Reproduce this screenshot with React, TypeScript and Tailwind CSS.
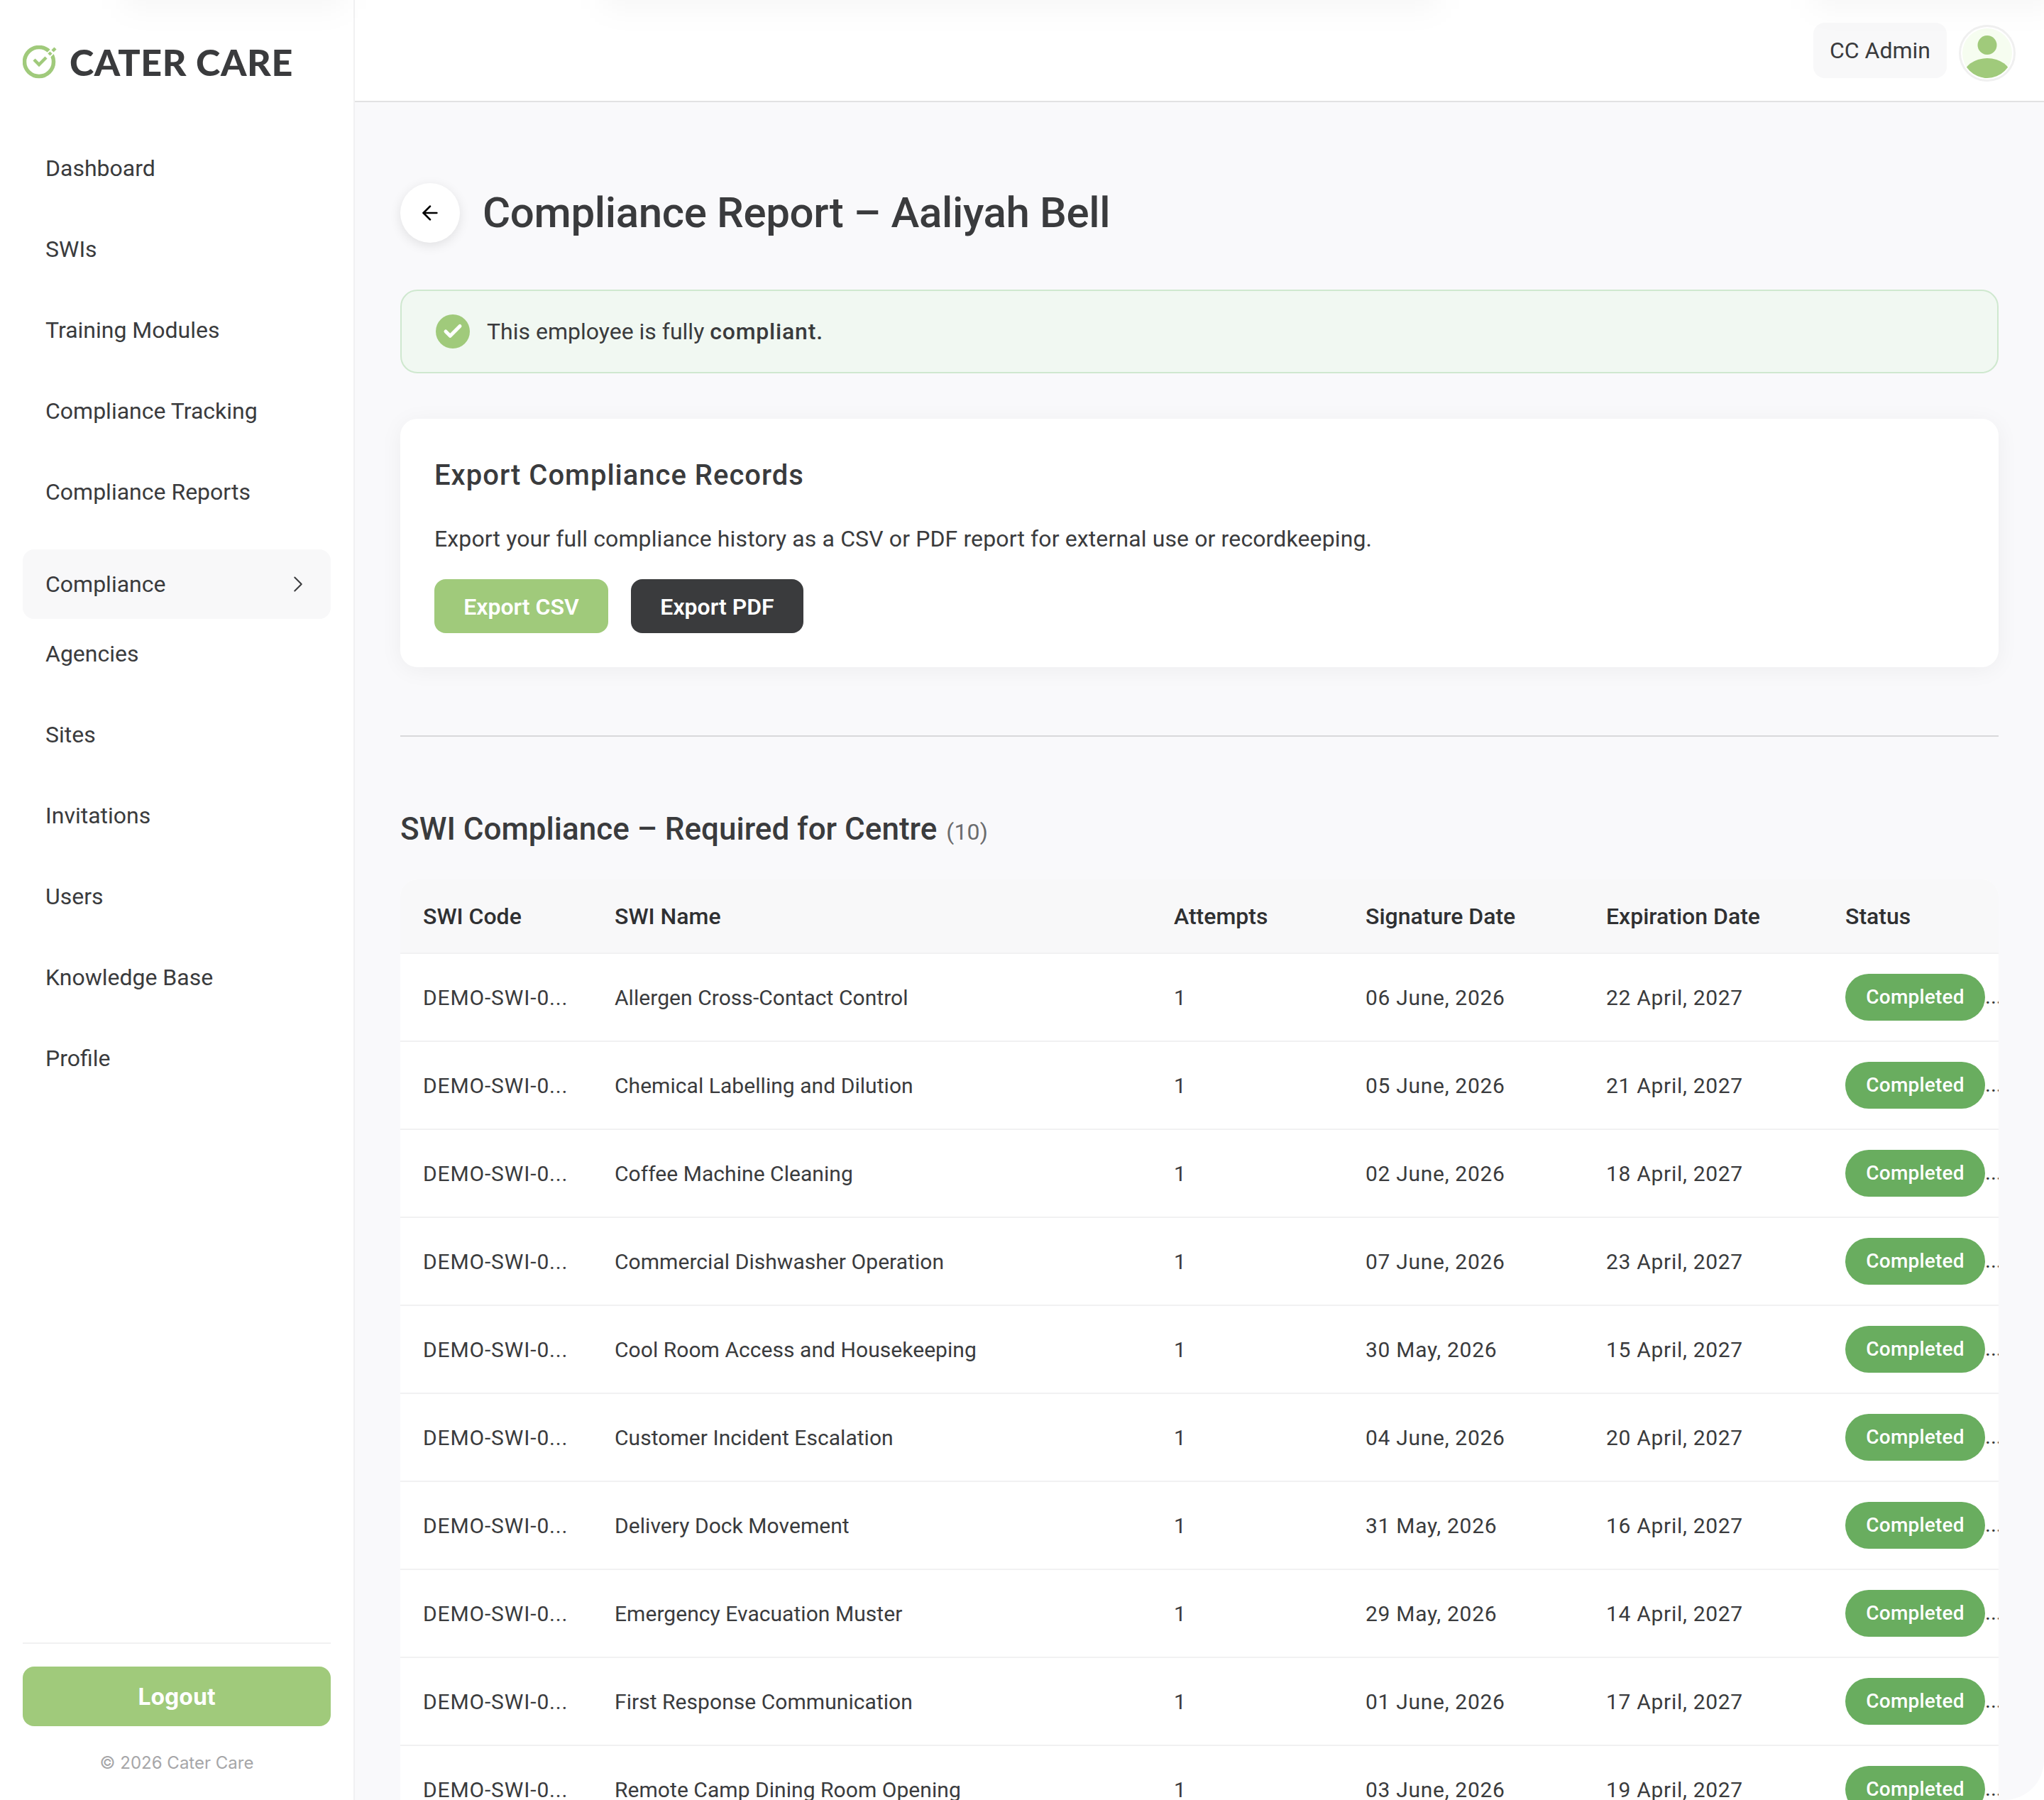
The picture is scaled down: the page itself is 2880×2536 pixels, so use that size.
import { ArrowLeft, ChevronRight, Check } from "lucide-react";

const topNav = ["Dashboard", "SWIs", "Training Modules", "Compliance Tracking", "Compliance Reports"];
const bottomNav = ["Agencies", "Sites", "Invitations", "Users", "Knowledge Base", "Profile"];

const rows = [
  { name: "Allergen Cross-Contact Control", signed: "06 June, 2026", expires: "22 April, 2027" },
  { name: "Chemical Labelling and Dilution", signed: "05 June, 2026", expires: "21 April, 2027" },
  { name: "Coffee Machine Cleaning", signed: "02 June, 2026", expires: "18 April, 2027" },
  { name: "Commercial Dishwasher Operation", signed: "07 June, 2026", expires: "23 April, 2027" },
  { name: "Cool Room Access and Housekeeping", signed: "30 May, 2026", expires: "15 April, 2027" },
  { name: "Customer Incident Escalation", signed: "04 June, 2026", expires: "20 April, 2027" },
  { name: "Delivery Dock Movement", signed: "31 May, 2026", expires: "16 April, 2027" },
  { name: "Emergency Evacuation Muster", signed: "29 May, 2026", expires: "14 April, 2027" },
  { name: "First Response Communication", signed: "01 June, 2026", expires: "17 April, 2027" },
  { name: "Remote Camp Dining Room Opening", signed: "03 June, 2026", expires: "19 April, 2027" },
];

function Logo() {
  return (
    <svg width="48" height="48" viewBox="0 0 48 48" className="shrink-0 mt-[1px]">
      <circle cx="23" cy="23" r="20.5" fill="none" stroke="#a0ca7b" strokeWidth="5.5" />
      <path d="M26 24 L48 2" stroke="#ffffff" strokeWidth="8" fill="none" />
      <path d="M16 20 L23 27 L33 17 M37 13 L40 10 M42 8 L46 4" stroke="#a0ca7b" strokeWidth="4.5" fill="none" />
    </svg>
  );
}

function Sidebar() {
  return (
    <aside className="w-[500px] h-full shrink-0 flex flex-col bg-white border-r-2 border-[#f1f1f2]">
      <div className="h-[174px] shrink-0 flex items-center gap-[18px] pl-[32px]">
        <Logo />
        <span className="text-[52px] leading-none font-black tracking-[0.6px] text-[#3a3b3d] font-['Lato',sans-serif]">CATER CARE</span>
      </div>
      <nav className="flex flex-col px-[32px] pt-[14px] flex-1">
        <div className="flex flex-col gap-[16px]">
          {topNav.map((item) => (
            <a key={item} className="h-[98px] flex items-center px-[32px] text-[32px] text-[#3a3b3d]">{item}</a>
          ))}
        </div>
        <div className="mt-[32px] h-[98px] flex items-center justify-between px-[32px] text-[32px] text-[#3a3b3d] bg-[#f8f8f9] rounded-[16px]">
          Compliance
          <ChevronRight size={38} strokeWidth={1.25} className="mr-[-5px]" />
        </div>
        <div className="flex flex-col gap-[16px]">
          {bottomNav.map((item) => (
            <a key={item} className="h-[98px] flex items-center px-[32px] text-[32px] text-[#3a3b3d]">{item}</a>
          ))}
        </div>
      </nav>
      <div className="mx-[32px] pt-[32px] border-t-2 border-[#f1f1f2] h-[222px] shrink-0">
        <button className="w-full h-[84px] pt-[2px] rounded-[16px] bg-[#a0ca7b] text-white text-[32px] font-bold font-['Inter',sans-serif]">Logout</button>
        <p className="mt-[36px] text-center text-[24px] leading-[32px] text-[#a6a6a8] font-['Inter',sans-serif]">© 2026 Cater Care</p>
      </div>
    </aside>
  );
}

function Header() {
  return (
    <header className="h-[144px] shrink-0 bg-white border-b-2 border-[#e2e2e3] flex items-start justify-end gap-[17px] pt-[32px] pr-[40px]">
      <div className="w-[188px] h-[78px] flex items-center justify-center rounded-[16px] bg-[#f8f8f9] text-[32px] text-[#3a3b3d]">CC Admin</div>
      <div className="mt-[3px] w-[80px] h-[80px] rounded-full border-[3px] border-[#f0f0f0] bg-white p-[2px]">
        <svg viewBox="0 0 70 70" className="w-full h-full">
          <clipPath id="avatar-clip"><circle cx="35" cy="35" r="35" /></clipPath>
          <circle cx="35" cy="35" r="35" fill="#f6fdf0" />
          <g clipPath="url(#avatar-clip)">
            <circle cx="35" cy="23.5" r="13.5" fill="#a0ca7b" />
            <ellipse cx="35" cy="68" rx="34" ry="26" fill="#a0ca7b" />
          </g>
        </svg>
      </div>
    </header>
  );
}

function ComplianceTable() {
  const th = "text-left font-medium text-[32px] px-[32px] h-[105px] text-[#2f3032] border-b-2 border-[#f1f1f2]";
  const td = "px-[32px] h-[124px] text-[30px] text-[#3a3b3d] border-b-2 border-[#f1f1f2] whitespace-nowrap overflow-hidden";
  return (
    <table className="w-[2252px] table-fixed border-separate border-spacing-0 bg-white rounded-t-[24px]">
      <colgroup>
        <col className="w-[270px]" />
        <col className="w-[788px]" />
        <col className="w-[270px]" />
        <col className="w-[339px]" />
        <col className="w-[337px]" />
        <col className="w-[248px]" />
      </colgroup>
      <thead className="bg-[#f8f8f9]">
        <tr>
          <th className={`${th} rounded-tl-[24px]`}>SWI Code</th>
          <th className={th}>SWI Name</th>
          <th className={th}>Attempts</th>
          <th className={th}>Signature Date</th>
          <th className={th}>Expiration Date</th>
          <th className={`${th} rounded-tr-[24px]`}>Status</th>
        </tr>
      </thead>
      <tbody>
        {rows.map((row) => (
          <tr key={row.name}>
            <td className={`${td} tracking-[0.85px]`}>DEMO-SWI-0...</td>
            <td className={`${td} tracking-[0.05px]`}>{row.name}</td>
            <td className={td}>1</td>
            <td className={`${td} tracking-[0.7px]`}>{row.signed}</td>
            <td className={`${td} tracking-[0.7px]`}>{row.expires}</td>
            <td className={`${td} pr-0`}>
              <div className="flex items-baseline">
                <span className="w-[197px] h-[66px] shrink-0 rounded-full bg-[#69ad5f] text-white text-[28px] font-medium tracking-[0.2px] flex items-center justify-center">Completed</span>
                <span className="text-[30px] leading-none">...</span>
              </div>
            </td>
          </tr>
        ))}
      </tbody>
    </table>
  );
}

export default function App() {
  return (
    <div className="w-[2880px] h-[2536px] overflow-hidden bg-white flex font-['Roboto',sans-serif] relative">
      <Sidebar />
      <div className="flex-1 h-full flex flex-col bg-[#f9f9fb] rounded-br-[56px] overflow-hidden">
        <Header />
        <main className="px-[64px] pt-[114px]">
          <div className="flex items-center gap-[32px]">
            <button className="w-[84px] h-[84px] rounded-full bg-white shadow-[0_4px_16px_rgba(0,0,0,0.1)] flex items-center justify-center text-black">
              <ArrowLeft size={32} strokeWidth={2} />
            </button>
            <h1 className="text-[60px] leading-[84px] font-medium tracking-[-0.35px] text-[#3a3b3d]">Compliance Report – Aaliyah Bell</h1>
          </div>

          <div className="mt-[66px] h-[118px] flex items-center gap-[24px] pl-[48px] rounded-[24px] border-2 border-[#cfe8cf] bg-[#f1f8f2] text-[32px] text-[#3a3b3d]">
            <span className="w-[48px] h-[48px] rounded-full bg-[#a0ca7b] flex items-center justify-center text-white">
              <Check size={30} strokeWidth={4} />
            </span>
            <span>This employee is fully <span className="font-medium tracking-[0.8px]">compliant.</span></span>
          </div>

          <section className="mt-[64px] h-[350px] rounded-[24px] bg-white shadow-[0_4px_32px_rgba(0,0,0,0.05)] px-[48px] pt-[48px]">
            <h2 className="text-[40px] leading-[64px] font-medium tracking-[1px] text-[#3a3b3d]">Export Compliance Records</h2>
            <p className="mt-[33px] text-[32px] leading-[48px] tracking-[0.12px] text-[#3a3b3d]">Export your full compliance history as a CSV or PDF report for external use or recordkeeping.</p>
            <div className="mt-[33px] flex gap-[32px]">
              <button className="w-[245px] h-[76px] pt-[1px] rounded-[16px] bg-[#a0ca7b] text-white text-[32px] font-semibold">Export CSV</button>
              <button className="w-[243px] h-[76px] pt-[1px] rounded-[16px] bg-[#3a3b3d] text-white text-[32px] font-semibold">Export PDF</button>
            </div>
          </section>

          <hr className="mt-[96px] border-t-2 border-[#d9d9db]" />

          <h2 className="mt-[94px] h-[72px] flex items-baseline gap-[13px] text-[44px] leading-[72px] font-medium text-[#3a3b3d]">
            SWI Compliance – Required for Centre
            <span className="text-[32px] font-normal tracking-[0.2px] text-[#6b6c6e]">(10)</span>
          </h2>

          <div className="mt-[35px]">
            <ComplianceTable />
          </div>
        </main>
      </div>

      {/* faint shadows bleeding in from above the page */}
      <div className="absolute top-[-50px] left-[175px] w-[310px] h-[62px] bg-black/[0.035] blur-[20px] pointer-events-none" />
      <div className="absolute top-[-50px] left-[850px] w-[1175px] h-[62px] bg-black/[0.035] blur-[20px] pointer-events-none" />
      <div className="absolute top-[-50px] left-[2555px] w-[340px] h-[62px] bg-black/[0.035] blur-[20px] pointer-events-none" />
    </div>
  );
}
